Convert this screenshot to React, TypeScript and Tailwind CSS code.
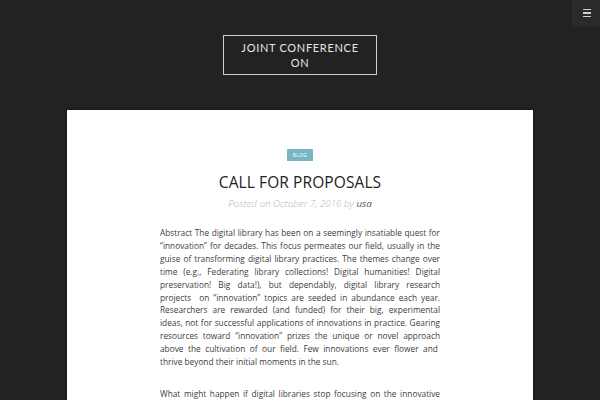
import React from "react";

const para1 = [
  "Abstract The digital library has been on a seemingly insatiable quest for",
  "“innovation” for decades. This focus permeates our field, usually in the",
  "guise of transforming digital library practices. The themes change over",
  "time (e.g., Federating library collections! Digital humanities! Digital",
  "preservation! Big data!), but dependably, digital library research",
  "projects\u00a0 on “innovation” topics are seeded in abundance each year.",
  "Researchers are rewarded (and funded) for their big, experimental",
  "ideas, not for successful applications of innovations in practice. Gearing",
  "resources toward “innovation” prizes the unique or novel approach",
  "above the cultivation of our field. Few innovations ever flower and\u00a0",
];
const para1Last = "thrive beyond their initial moments in the sun.";
const para2 = [
  "What might happen if digital libraries stop focusing on the innovative",
  "solution as an end in itself, and start thinking about the process of using",
];

export default function App() {
  const sans = { fontFamily: '"Open Sans", "Noto Sans", sans-serif' };
  return (
    <div className="w-[600px] h-[400px] overflow-hidden bg-[#222222] relative" style={sans}>
      <div className="absolute right-0 top-0 w-[28px] h-[26px] bg-[#2a2a2a] flex flex-col items-center justify-center gap-[2px] pl-[1px]">
        <span className="block w-[8px] h-[1.5px] bg-[#d0d0d0]"></span>
        <span className="block w-[8px] h-[1.5px] bg-[#d0d0d0]"></span>
        <span className="block w-[8px] h-[1.5px] bg-[#d0d0d0]"></span>
      </div>
      <div className="flex justify-center pt-[35px]">
        <div className="border-[1.5px] border-[#cfcfcf] w-[154px] h-[40px] flex flex-col items-center justify-center text-[#e6e6e6] text-[11px] leading-[15px] tracking-[0.7px] font-['Lato',sans-serif]">
          <div>JOINT CONFERENCE</div>
          <div>ON</div>
        </div>
      </div>
      <div className="mx-[67px] mt-[35px] bg-white h-[300px] shadow-[0_0_2px_rgba(0,0,0,0.6)]">
        <div className="flex flex-col items-center pt-[39px]">
          <span className="bg-[#78b6c6] text-white text-[5px] leading-[12px] px-[6px] tracking-[0.3px]">BLOG</span>
          <h1 className="mt-[10px] text-[15.5px] leading-[22px] text-[#222] font-['Open_Sans',sans-serif] tracking-[0.1px]">CALL FOR PROPOSALS</h1>
          <div className="mt-[4px] text-[9.8px] leading-[13px] italic font-light text-[#b8b8b8]">
            Posted on October 7, 2016 by <span className="text-[#555] font-normal">usa</span>
          </div>
        </div>
        <div className="mx-[93px] mt-[17px] text-[8.3px] leading-[12.9px] text-[#3d3d3d]">
          <p>
            {para1.map((l, i) => (
              <span key={i} className="block whitespace-nowrap text-justify [text-align-last:justify]">{l}</span>
            ))}
            <span className="block whitespace-nowrap">{para1Last}</span>
          </p>
          <p className="mt-[19px]">
            {para2.map((l, i) => (
              <span key={i} className="block whitespace-nowrap text-justify [text-align-last:justify]">{l}</span>
            ))}
          </p>
        </div>
      </div>
    </div>
  );
}
